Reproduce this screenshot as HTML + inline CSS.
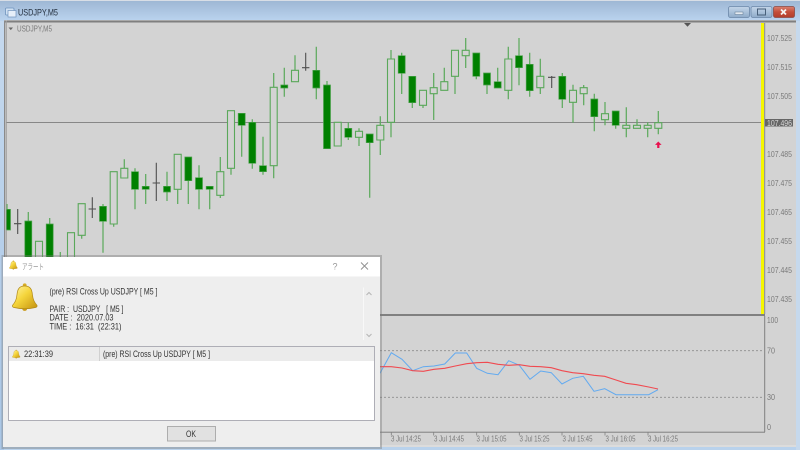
<!DOCTYPE html>
<html><head><meta charset="utf-8"><title>USDJPY,M5</title>
<style>
html,body{margin:0;padding:0;width:800px;height:450px;overflow:hidden;background:#b9d2ec}
svg{display:block;filter:blur(.3px)}
text{font-family:"Liberation Sans","Noto Sans CJK JP",sans-serif}
.a{font-size:8px;fill:#7a7a7a}
.t{font-size:9px;fill:#333}
</style></head><body>
<svg xmlns="http://www.w3.org/2000/svg" width="800" height="450" viewBox="0 0 800 450">
<defs>
<linearGradient id="tb" x1="0" y1="0" x2="0" y2="1"><stop offset="0" stop-color="#9db6d3"/><stop offset="1" stop-color="#bbd4ef"/></linearGradient>
<linearGradient id="lb" x1="0" y1="0" x2="0" y2="1"><stop offset="0" stop-color="#c5d9ee"/><stop offset="1" stop-color="#a9c6e6"/></linearGradient>
<linearGradient id="bg" x1="0" y1="0" x2="1" y2="1"><stop offset="0" stop-color="#fff6a8"/><stop offset=".45" stop-color="#f5d53c"/><stop offset="1" stop-color="#c4920f"/></linearGradient>
<linearGradient id="bt" x1="0" y1="0" x2="0" y2="1"><stop offset="0" stop-color="#c4d5e8"/><stop offset=".5" stop-color="#a9c1da"/><stop offset="1" stop-color="#8fabc9"/></linearGradient>
<linearGradient id="cl" x1="0" y1="0" x2="0" y2="1"><stop offset="0" stop-color="#d98272"/><stop offset=".5" stop-color="#c44d3a"/><stop offset="1" stop-color="#b23e2c"/></linearGradient>
<g id="bell"><circle cx="24.700" cy="308.300" r="2.600" fill="#c99a1a"/><circle cx="24.700" cy="285.300" r="1.900" fill="#d8ad25"/><path d="M24.700 286C19 286 17.500 289.500 17 294.500C16.500 300 15 302.500 12.500 305.300Q12 307 14 307.500Q24.700 310 35.500 307.500Q37.500 307 37 305.300C34.500 302.500 33 300 32.400 294.500C31.900 289.500 30.400 286 24.700 286z" fill="url(#bg)" stroke="#b28a18" stroke-width=".7"/></g>
<clipPath id="cc"><rect x="6.500" y="23" width="754.500" height="291"/></clipPath>
</defs>

<rect width="800" height="450" fill="#b9d2ec"/>
<rect x="0" y="20" width="4" height="430" fill="url(#lb)"/>
<rect x="796" y="20" width="4" height="430" fill="#c6d9ed"/>
<rect width="800" height="21" fill="url(#tb)"/>
<rect width="800" height="1" fill="#d8dee6"/>

<!-- title bar -->
<rect x="5.500" y="8" width="8.500" height="7" rx="1" fill="#cfe0f2" stroke="#6f93bd" stroke-width=".8"/>
<rect x="8" y="10.500" width="8" height="6.500" fill="#e6eff9" stroke="#6f93bd" stroke-width=".7"/>
<text x="18" y="15.500" font-size="9" fill="#24303f" textLength="40" lengthAdjust="spacingAndGlyphs">USDJPY,M5</text>
<rect x="728.500" y="6.500" width="21" height="11" rx="2" fill="url(#bt)" stroke="#6b87a8" stroke-width=".8"/>
<rect x="735" y="12" width="8" height="2.500" fill="#e4eaf1" stroke="#5d7690" stroke-width=".5"/>
<rect x="751" y="6.500" width="21" height="11" rx="2" fill="url(#bt)" stroke="#6b87a8" stroke-width=".8"/>
<rect x="757.500" y="9" width="8" height="6" fill="none" stroke="#48607a" stroke-width="1"/>
<rect x="773.500" y="6.500" width="21" height="11" rx="2" fill="url(#cl)" stroke="#8c4a44" stroke-width=".8"/>
<path d="M781 9.500l5 5M786 9.500l-5 5" stroke="#f4f4f4" stroke-width="1.800"/>

<!-- chart area -->
<rect x="4" y="20" width="792" height="427" fill="#d3d3d3"/>
<rect x="4" y="447" width="792" height="3" fill="#b9d2ec"/>
<rect x="4" y="445" width="792" height="2" fill="#dcdcdc"/>
<rect x="4" y="20.500" width="792" height="1.600" fill="#7f7f7f"/>
<rect x="4" y="22" width="792" height="1" fill="#a8a8a8"/>
<rect x="4" y="20.500" width="1.200" height="426" fill="#8a8a8a"/>
<rect x="5.800" y="20.500" width="1" height="426" fill="#a0a0a0"/>
<rect x="761" y="23" width="3" height="291.500" fill="#f6f600"/>
<rect x="764.200" y="23" width="1" height="291" fill="#8a8a8a"/>
<rect x="6" y="314" width="759" height="2" fill="#808080"/>
<rect x="764.200" y="316" width="1" height="116" fill="#808080"/>
<rect x="6" y="431.700" width="759" height="1" fill="#808080"/>

<path d="M8.500 27.500h4.500l-2.200 2.600z" fill="#666"/>
<text x="17" y="31.500" class="a" textLength="35" lengthAdjust="spacingAndGlyphs">USDJPY,M5</text>
<path d="M684 23h7l-3.500 3.800z" fill="#555"/>

<!-- price line -->
<path d="M6.500 122.500H761" stroke="#878787" stroke-width="1"/>

<g clip-path="url(#cc)">
<!-- wicks -->
<path fill="none" stroke="#5eaa5e" stroke-width="1.250" d="M7 204V230M28.300 212V300M49.700 218V300M60.300 252V300M81.700 235V238.700M103 204V252.700M113.700 224V226.700M124.300 159.300V168.300M135 168.300V209.300M145.700 174V204M167 171.700V201M177.700 189V204M188.300 157V204M199 165.300V209.300M209.700 186V209.300M220.300 157V171.700M220.300 195V198M231 168V174.700M241.700 113V156.700M252.300 119.300V168.700M263 136.700V174.700M273.700 73V87.300M273.700 165.700V178.300M284.300 67.700V96.700M295 55.300V70.300M316.300 46.700V99.300M327 81V148M348.300 122.300V140M359 128.300V131.300M359 137.300V146M369.700 134V197.700M380.300 116.300V125.300M380.300 140V155M391 50V59M391 122.300V137.300M401.700 52.700V94M412.300 76V108M423 105.300V108M433.700 73V87.700M433.700 93.700V120M444.300 67.700V81.700M455 76.300V94M465.700 38V50.300M465.700 55.700V68M476.300 53V79.300M487 73V94M497.700 67.700V88M508.300 46.700V59M508.300 90.300V99.300M519 38V85.300M529.700 52.700V96.700M540.300 58.700V76.300M540.300 87.700V94M562.300 73V108M573 84.700V90.300M573 102.300V122.700M583.700 85V87.700M583.700 93.700V105.300M594.300 93.700V131.300M605 102V113.700M605 119.700V125.300M615.700 111V128.700M626.300 107.300V125.300M626.300 128.300V137.300M637 119.300V125.300M647.700 122.300V125.300M647.700 128.300V137.300M658.300 111V122.700M658.300 128.300V134.300"/>
<!-- doji -->
<path fill="none" stroke="#4f4f4f" stroke-width="1.100" d="M17.700 209V234M14 223.700h7.400M92.300 197.300V218M88.600 209H96M156.300 162.700V201M152.600 183H160M305.700 52.700V70.700M302 67.700h7.400M551.700 76V88M548 77.300h7.400"/>
<!-- hollow bodies -->
<path fill="#d3d3d3" stroke="#5aa85a" stroke-width="1.100" d="M35.500 241.300h7V300h-7zM67.500 232.700h7V300h-7zM78.200 203.700h7V235.300h-7zM110.200 171.700h7V224h-7zM120.800 168.300h7V178h-7zM174.200 154.300h7V189.300h-7zM216.800 171.700h7V195.300h-7zM227.500 110.700h7V168.300h-7zM270.200 87.300h7V165.700h-7zM291.500 70.300h7V81.700h-7zM334.200 122.300h7V146h-7zM355.500 131.300h7V137.300h-7zM376.800 125.300h7V140h-7zM387.500 59h7V122.300h-7zM419.500 90.300h7V105.300h-7zM430.200 87.700h7V93.700h-7zM440.800 81.700h7V90.300h-7zM451.500 50.300h7V76.300h-7zM462.200 50.300h7V55.700h-7zM504.800 59h7V90.300h-7zM536.800 76.300h7V87.700h-7zM569.500 90.300h7V102.300h-7zM580.200 87.700h7V93.700h-7zM601.500 113.700h7V119.700h-7zM622.800 125.300h7V128.300h-7zM633.500 125.300h7V128.300h-7zM644.200 125.300h7V128.300h-7zM654.800 122.700h7V128.300h-7z"/>
<!-- filled bodies -->
<path fill="#008000" stroke="#4da34d" stroke-width=".7" d="M3.500 209.300h7V230h-7zM24.800 221h7V300h-7zM46.200 224h7V300h-7zM99.500 206.300h7V221.300h-7zM131.500 171.700h7V189.300h-7zM142.200 186.300h7V189.300h-7zM163.500 186.300h7V192h-7zM184.800 157h7V180.700h-7zM195.500 177.700h7V189.300h-7zM206.200 186.300h7V189.300h-7zM238.200 113.300h7V125.300h-7zM248.800 122.300h7V163.300h-7zM259.500 165.700h7V171.700h-7zM280.800 85h7V88h-7zM312.800 70.300h7V88h-7zM323.500 85h7V148.700h-7zM344.800 128.300h7V137.300h-7zM366.200 134h7V142.700h-7zM398.200 55.700h7V73.300h-7zM408.800 76.300h7V102.700h-7zM472.800 53h7V76.300h-7zM483.500 73h7V85h-7zM494.200 81.700h7V88h-7zM515.500 55.700h7V67.700h-7zM526.200 64.300h7V90.700h-7zM558.800 76.300h7V99.300h-7zM590.800 99h7V116.700h-7zM612.200 111h7V125.300h-7z"/>
<!-- arrow -->
<path d="M658.300 141.500l3.300 3.400h-2.200V148h-2.200v-3.100H655z" fill="#e8104e"/>
</g>

<!-- price axis -->
<text x="767" y="41" class="a" textLength="25" lengthAdjust="spacingAndGlyphs">107.525</text>
<text x="767" y="70" class="a" textLength="25" lengthAdjust="spacingAndGlyphs">107.515</text>
<text x="767" y="99" class="a" textLength="25" lengthAdjust="spacingAndGlyphs">107.505</text>
<rect x="765" y="119" width="28" height="7.500" fill="#666"/>
<text x="767" y="126" font-size="8" fill="#d8d8d8" textLength="25" lengthAdjust="spacingAndGlyphs">107.496</text>
<text x="767" y="157" class="a" textLength="25" lengthAdjust="spacingAndGlyphs">107.485</text>
<text x="767" y="186" class="a" textLength="25" lengthAdjust="spacingAndGlyphs">107.475</text>
<text x="767" y="215" class="a" textLength="25" lengthAdjust="spacingAndGlyphs">107.465</text>
<text x="767" y="244" class="a" textLength="25" lengthAdjust="spacingAndGlyphs">107.455</text>
<text x="767" y="273" class="a" textLength="25" lengthAdjust="spacingAndGlyphs">107.445</text>
<text x="767" y="302" class="a" textLength="25" lengthAdjust="spacingAndGlyphs">107.435</text>
<text x="767" y="323" class="a" textLength="11" lengthAdjust="spacingAndGlyphs">100</text>
<text x="767" y="353.500" class="a" textLength="8" lengthAdjust="spacingAndGlyphs">70</text>
<text x="767" y="400" class="a" textLength="8" lengthAdjust="spacingAndGlyphs">30</text>
<text x="767" y="430" class="a" textLength="4" lengthAdjust="spacingAndGlyphs">0</text>

<!-- indicator -->
<path d="M380 350.700H764M8 397.300H764" stroke="#8e8e8e" stroke-width=".8" stroke-dasharray="2 2" fill="none"/>
<path fill="none" stroke="#62aaf0" stroke-width="1" d="M380 373.300L391.300 352.700L402 359.300L412.700 370.700L423.300 366.700L434 366L444.700 364L455.300 353L466.700 353L476.700 368.300L487.300 373.300L498 374.700L508.700 360.700L519.300 365.300L530 379.300L540.700 371L551.300 372.700L562 384L572.700 378.300L583.300 376.300L594 391.300L604.700 388.700L616 394.700L626 394.700L636.700 394.700L648.700 394.700L658 389.700"/>
<path fill="none" stroke="#f04a50" stroke-width="1.100" d="M380 366.700L391.300 366.700L402 368L412.700 370.700L423.300 371.300L434 369.300L444.700 368.300L455.300 366L466.700 363.700L476.700 362.700L487.300 362.300L498 364.300L508.700 365.300L519.300 364.700L530 366.300L540.700 366.700L551.300 367.700L562 370.700L572.700 372.700L583.300 373.700L594 375.300L604.700 376.300L616 380L626 383.300L636.700 384.700L648.700 387L658 389"/>
<path d="M391.300 432.500v3M433.700 432.500v3M476.700 432.500v3M519.300 432.500v3M562 432.500v3M605 432.500v3M648 432.500v3" stroke="#808080" stroke-width=".8"/>
<text x="391" y="441.500" class="a" textLength="30" lengthAdjust="spacingAndGlyphs">3 Jul 14:25</text>
<text x="434" y="441.500" class="a" textLength="30" lengthAdjust="spacingAndGlyphs">3 Jul 14:45</text>
<text x="476.500" y="441.500" class="a" textLength="30" lengthAdjust="spacingAndGlyphs">3 Jul 15:05</text>
<text x="519.500" y="441.500" class="a" textLength="30" lengthAdjust="spacingAndGlyphs">3 Jul 15:25</text>
<text x="562.500" y="441.500" class="a" textLength="30" lengthAdjust="spacingAndGlyphs">3 Jul 15:45</text>
<text x="605.500" y="441.500" class="a" textLength="30" lengthAdjust="spacingAndGlyphs">3 Jul 16:05</text>
<text x="648" y="441.500" class="a" textLength="30" lengthAdjust="spacingAndGlyphs">3 Jul 16:25</text>

<!-- dialog -->
<rect x="1.500" y="255" width="380.500" height="194" fill="#777" opacity=".4"/>
<rect x="3" y="257" width="377" height="190" fill="#eee"/>
<rect x="3" y="257" width="377" height="19.500" fill="#fff"/>
<use href="#bell" transform="translate(5.200 167) scale(.33)"/>
<text x="22" y="269.500" font-size="8" fill="#9a9a9a" textLength="22" lengthAdjust="spacingAndGlyphs">アラート</text>
<text x="332.500" y="269.500" font-size="9" fill="#999">?</text>
<path d="M361 262.500l7 7M368 262.500l-7 7" stroke="#8f8f8f" stroke-width=".9"/>

<use href="#bell"/>
<text x="49.500" y="294.500" class="t" textLength="108" lengthAdjust="spacingAndGlyphs">(pre) RSI Cross Up USDJPY [ M5 ]</text>
<text x="49.500" y="312" class="t" textLength="74" lengthAdjust="spacingAndGlyphs" xml:space="preserve">PAIR :  USDJPY   [ M5 ]</text>
<text x="49.500" y="320.700" class="t" textLength="64" lengthAdjust="spacingAndGlyphs" xml:space="preserve">DATE :  2020.07.03</text>
<text x="49.500" y="329.500" class="t" textLength="72" lengthAdjust="spacingAndGlyphs" xml:space="preserve">TIME :  16:31  (22:31)</text>

<path d="M363.500 287.500V340" stroke="#f8f8f8" stroke-width="1"/>
<path d="M366.500 295l2.500-2.500l2.500 2.500M366.500 334l2.500 2.500l2.500-2.500" fill="none" stroke="#b5b5b5" stroke-width="1"/>

<rect x="8.500" y="346.500" width="366" height="74" fill="#fff" stroke="#aeaeb6" stroke-width="1"/>
<rect x="9" y="347" width="365" height="14" fill="#ebebeb"/>
<path d="M99.500 347V361" stroke="#d0d0d0" stroke-width="1"/>
<use href="#bell" transform="translate(8.300 259) scale(.32)"/>
<text x="24" y="357" class="t" textLength="29" lengthAdjust="spacingAndGlyphs">22:31:39</text>
<text x="103" y="357" class="t" textLength="107" lengthAdjust="spacingAndGlyphs">(pre) RSI Cross Up USDJPY [ M5 ]</text>

<rect x="167.500" y="426.500" width="48" height="14.500" fill="#e1e1e1" stroke="#adadad" stroke-width="1"/>
<text x="186" y="437" class="t" textLength="10" lengthAdjust="spacingAndGlyphs">OK</text>
</svg>
</body></html>
